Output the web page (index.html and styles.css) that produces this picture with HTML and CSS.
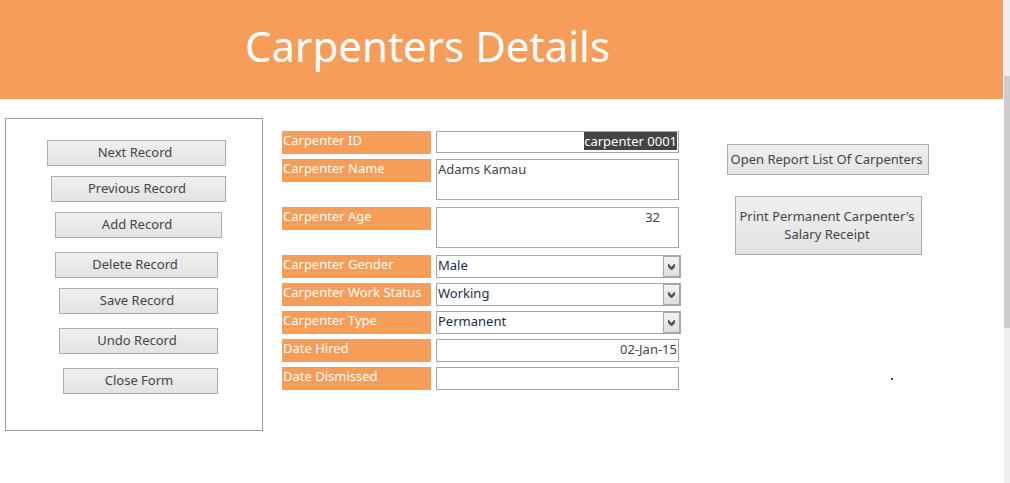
FILE: index.html
```html
<!DOCTYPE html>
<html lang="en">
<head>
<meta charset="utf-8">
<title>Carpenters Details</title>
<link rel="stylesheet" href="styles.css">
</head>
<body>
<div class="page">
  <header class="banner"><h1 class="title">Carpenters Details</h1></header>
  <main class="content">
    <nav class="panel" aria-label="Record actions">
      <button class="btn" type="button">Next Record</button>
      <button class="btn previous" type="button">Previous Record</button>
      <button class="btn add" type="button">Add Record</button>
      <button class="btn delete spaced" type="button">Delete Record</button>
      <button class="btn narrow" type="button">Save Record</button>
      <button class="btn narrow spaced" type="button">Undo Record</button>
      <button class="btn close spaced" type="button">Close Form</button>
    </nav>
    <form class="form">
      <div class="row"><label class="label" for="cid">Carpenter ID</label><input class="field right short" id="cid" type="text" value="carpenter 0001"></div>
      <div class="row"><label class="label" for="cname">Carpenter Name</label><textarea class="field tall" id="cname">Adams Kamau</textarea></div>
      <div class="row"><label class="label" for="cage">Carpenter Age</label><textarea class="field tall right age" id="cage">32</textarea></div>
      <div class="row"><label class="label" for="gender">Carpenter Gender</label>
        <div class="combo"><select class="select" id="gender"><option>Male</option><option>Female</option></select><span class="arrow"><svg viewBox="0 0 7 6" width="7" height="6"><path d="M0 0H1L3.5 3L6 0H7V3L4 6H3L0 3Z" /></svg></span></div></div>
      <div class="row"><label class="label" for="status">Carpenter Work Status</label>
        <div class="combo"><select class="select" id="status"><option>Working</option></select><span class="arrow"><svg viewBox="0 0 7 6" width="7" height="6"><path d="M0 0H1L3.5 3L6 0H7V3L4 6H3L0 3Z" /></svg></span></div></div>
      <div class="row"><label class="label" for="type">Carpenter Type</label>
        <div class="combo"><select class="select" id="type"><option>Permanent</option></select><span class="arrow"><svg viewBox="0 0 7 6" width="7" height="6"><path d="M0 0H1L3.5 3L6 0H7V3L4 6H3L0 3Z" /></svg></span></div></div>
      <div class="row"><label class="label" for="hired">Date Hired</label><input class="field right" id="hired" type="text" value="02-Jan-15"></div>
      <div class="row"><label class="label" for="dismissed">Date Dismissed</label><input class="field right" id="dismissed" type="text"></div>
    </form>
    <aside class="reports">
      <button class="btn report" type="button">Open Report List Of Carpenters</button>
      <button class="btn receipt" type="button">Print Permanent Carpenter's<br>Salary Receipt</button>
      <span class="dot"></span>
    </aside>
  </main>
</div>
<div class="scrollbar"><div class="thumb"></div></div>
<script src="main.js"></script>
</body>
</html>
```
FILE: styles.css
```css
* { box-sizing: border-box; }

body {
  display: flex;
  gap: 1px;
  min-height: 100vh;
  margin: 0;
  background: #fff;
  color: #444;
  font: 13px/18px "Noto Sans", "Open Sans", sans-serif;
}

.page { flex: 1; }

.banner {
  padding: 16px 148px 23px 0;
  background: #f69d59;
  text-align: center;
}

.title {
  margin: 0;
  color: #fff;
  font-size: 42px;
  font-weight: 400;
  line-height: 60px;
}

.content {
  display: grid;
  grid-template-columns: 258px 399px 1fr;
  column-gap: 19px;
  align-items: start;
  padding: 19px 24px 48px 5px;
}

.panel {
  display: flex;
  flex-direction: column;
  gap: 10px;
  padding: 21px 36px 36px 41px;
  border: 1px solid #9c9c9c;
}

.btn {
  min-height: 26px;
  padding: 0 3px 2px 0;
  border: 1px solid #ababab;
  border-radius: 0;
  background: linear-gradient(#f0f0f0, #e3e3e3);
  color: #444;
  font: inherit;
}

.previous { margin-left: 4px; }
.add { margin: 0 4px 0 8px; }
.delete { margin: 0 8px; }
.narrow { margin: 0 8px 0 12px; }
.close { margin: 0 8px 0 16px; }
.spaced { margin-top: 4px; }

.form {
  display: flex;
  flex-direction: column;
  gap: 5px;
  padding-top: 13px;
}

.row {
  display: grid;
  grid-template-columns: 149px 1fr;
  column-gap: 5px;
  align-items: start;
}

.label {
  height: 23px;
  padding-left: 1px;
  background: #f69d59;
  color: #fff;
  white-space: nowrap;
}

.field {
  display: block;
  width: calc(100% - 2px);
  height: 23px;
  margin: 0;
  padding: 0 1px 3px;
  border: 1px solid #a6a6a6;
  border-radius: 0;
  outline: none;
  background: #fff;
  color: #444;
  font: inherit;
  resize: none;
}

.short { height: 22px; padding-bottom: 2px; }
.tall { height: 41px; margin-bottom: 2px; }
.right { text-align: right; }
.age { padding-right: 18px; }
.field::selection { background: #444; color: #fff; }

.combo {
  display: grid;
  grid-template-columns: 1fr 17px;
  height: 23px;
  border: 1px solid #a6a6a6;
}

.select {
  grid-area: 1 / 1 / 2 / 3;
  appearance: none;
  padding: 0 1px 3px;
  border: 0;
  border-radius: 0;
  background: #fff;
  color: #1e2b47;
  font: inherit;
}

.arrow {
  display: grid;
  grid-area: 1 / 2;
  place-items: center;
  z-index: 1;
  border: 1px solid #a6a6a6;
  background: linear-gradient(#f3f3f3, #dedede);
  pointer-events: none;
}

.arrow path { fill: #555; }

.reports {
  display: flex;
  flex-direction: column;
  align-items: flex-start;
  padding: 26px 0 0 27px;
}

.report { min-height: 31px; width: 202px; white-space: nowrap; }
.receipt { min-height: 59px; width: 187px; margin: 21px 0 0 8px; white-space: nowrap; }

.dot {
  width: 2px;
  height: 2px;
  margin: 123px 0 0 164px;
  background: #2a2ae0;
}

.scrollbar {
  width: 6px;
  padding-top: 76px;
  background: #f0f0f0;
}

.thumb { height: 252px; background: #cdcdcd; }
```
FILE: main.js
```js
const idField = document.getElementById("cid");
idField.focus();
idField.select();
```
